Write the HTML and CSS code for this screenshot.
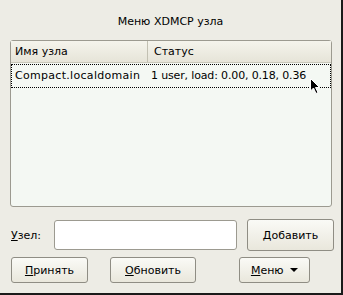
FILE: index.html
```html
<!DOCTYPE html>
<html lang="ru">
<head>
    <meta charset="UTF-8">
    <title>Меню XDMCP узла</title>
    <link rel="stylesheet" href="styles.css">
</head>
<body>
    <div class="window">
        <div class="title">Меню XDMCP узла</div>

        <div class="list">
            <div class="list-head">
                <div class="col col-name">Имя узла</div>
                <div class="col col-status">Статус</div>
            </div>
            <div class="row selected">
                <div class="col col-name">Compact.localdomain</div>
                <div class="col col-status">1 user, load: 0.00, 0.18, 0.36</div>
            </div>
            <!-- mouse pointer over the row -->
            <svg class="cursor" width="11" height="17" viewBox="0 0 11 17">
                <path d="M0.5 0.5 L0.5 13 L3.5 10 L6 15.5 L8 14.5 L5.5 9.5 L9.5 9.5 Z" fill="#000" stroke="#fff" stroke-width="1"/>
            </svg>
        </div>

        <div class="host-line">
            <label class="host-label"><u>У</u>зел:</label>
            <input class="entry" type="text">
            <button class="btn btn-add"><u>Д</u>обавить</button>
        </div>

        <div class="actions">
            <button class="btn btn-ok"><u>П</u>ринять</button>
            <button class="btn btn-refresh"><u>О</u>бновить</button>
            <button class="btn btn-menu"><u>М</u>еню <span class="arrow"></span></button>
        </div>
    </div>
</body>
</html>
```

FILE: styles.css
```css
body {
    margin: 0;
    font-family: "DejaVu Sans", sans-serif;
    font-size: 11px;
    color: #000;
}

.window {
    width: 343px;
    height: 295px;
    box-sizing: border-box;
    background-color: #edece5;
    border-right: 2px solid #1a1a1a;
    border-bottom: 2px solid #1a1a1a;
    padding: 15px 0 0 10px;
}

.title {
    text-align: center;
    height: 25px;
    padding-right: 10px;
}

.list {
    position: relative;
    width: 322px;
    height: 167px;
    box-sizing: border-box;
    border: 1px solid #9c9a90;
    border-radius: 3px;
    background-color: #f4f8f3;
}

.list-head {
    display: flex;
    height: 21px;
    background: linear-gradient(#f5f4ec, #e6e4d8);
    border-bottom: 1px solid #c9c7ba;
}

.list-head .col {
    line-height: 21px;
}

.col {
    padding-left: 4px;
    box-sizing: border-box;
}

.col-name {
    width: 137px;
}

.list-head .col-name {
    border-right: 1px solid #c2c0b2;
}

.col-status {
    flex: 1;
    padding-left: 6px;
}

.row {
    display: flex;
    height: 24px;
    line-height: 22px;
    margin-top: 1px;
    box-sizing: border-box;
    border: 1px dotted #000;
}

.row .col-name {
    padding-left: 3px;
    letter-spacing: 0.3px;
}

.row .col-status {
    padding-left: 2px;
    letter-spacing: -0.15px;
}

.cursor {
    position: absolute;
    left: 299px;
    top: 37px;
}

.host-line {
    display: flex;
    align-items: center;
    margin-top: 12px;
    height: 32px;
}

.host-label {
    width: 43px;
    padding-left: 1px;
}

.entry {
    width: 183px;
    height: 30px;
    box-sizing: border-box;
    border: 1px solid #9c9a90;
    border-radius: 3px;
    background-color: #fff;
    margin: 0;
}

.btn {
    font-family: "DejaVu Sans", sans-serif;
    font-size: 11px;
    color: #000;
    height: 26px;
    box-sizing: border-box;
    border: 1px solid #8f8d84;
    border-radius: 3px;
    background: linear-gradient(#fafaf6, #e9e7dc);
    padding: 0;
    margin: 0;
}

.btn-add {
    margin-left: 10px;
    width: 87px;
    height: 32px;
}

.actions {
    display: flex;
    margin-top: 6px;
    padding-left: 1px;
}

.btn-ok {
    width: 77px;
}

.btn-refresh {
    width: 86px;
    margin-left: 22px;
}

.btn-menu {
    width: 71px;
    margin-left: 43px;
}

.arrow {
    display: inline-block;
    width: 0;
    height: 0;
    border-left: 4px solid transparent;
    border-right: 4px solid transparent;
    border-top: 4px solid #000;
    vertical-align: 2px;
    margin-left: 3px;
}
```
